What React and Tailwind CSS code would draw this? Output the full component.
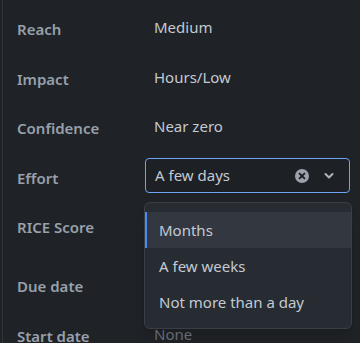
import React from 'react';

const rows = [
  { label: 'Reach', value: 'Medium' },
  { label: 'Impact', value: 'Hours/Low' },
  { label: 'Confidence', value: 'Near zero' },
];

const options = ['Months', 'A few weeks', 'Not more than a day'];

function EffortSelect() {
  return (
    <div className="relative mt-[5.5px] w-[205px]">
      <div className="flex h-[35px] items-center rounded-[4px] border border-[#6ea4f2] bg-[#1d2025] pl-[9px] pr-[15px]">
        <span className="flex-1 text-[15px] text-[#c3cad3]">A few days</span>
        <svg width="14" height="14" viewBox="0 0 14 14" className="mr-[15px]">
          <circle cx="7" cy="7" r="7" fill="#9ca2ab" />
          <path d="M4.6 4.6 L9.4 9.4 M9.4 4.6 L4.6 9.4" stroke="#1d2025" strokeWidth="2" strokeLinecap="round" />
        </svg>
        <svg width="10" height="8" viewBox="0 0 10 8">
          <path d="M1.5 2 L5 5.5 L8.5 2" fill="none" stroke="#aeb4bc" strokeWidth="2" strokeLinecap="round" strokeLinejoin="round" />
        </svg>
      </div>
      <div className="absolute left-[-1px] top-[44px] z-10 w-[208px] rounded-[6px] border border-[#3a3f47] bg-[#272b32] pt-[9px] pb-[8px] shadow-lg">
        {options.map((o, i) => (
          <div
            key={o}
            className={
              'flex h-[36px] items-center pl-[12px] text-[15px] text-[#c3cad3] ' +
              (i === 0 ? 'border-l-2 border-[#4c8ef0] bg-[#323740]' : 'border-l-2 border-transparent')
            }
          >
            {o}
          </div>
        ))}
      </div>
    </div>
  );
}

export default function App() {
  return (
    <div
      className="h-[343px] w-[360px] overflow-hidden bg-[#1f2226]"
      style={{ fontFamily: '"Noto Sans", "Open Sans", sans-serif' }}
    >
      <div className="ml-[2px] h-full border-l border-[#30353c] pt-[4px] pl-[14px]">
        {rows.map((r) => (
          <div key={r.label} className="flex h-[49.5px]">
            <div className="w-[128px] pt-[15px] text-[15px] font-semibold leading-5 text-[#97a0ab]">{r.label}</div>
            <div className="pl-[9px] pt-[13px] text-[15px] leading-5 text-[#c3cad3]">{r.value}</div>
          </div>
        ))}
        <div className="flex h-[49.5px]">
          <div className="w-[128px] pt-[15px] text-[15px] font-semibold leading-5 text-[#97a0ab]">Effort</div>
          <EffortSelect />
        </div>
        <div className="flex h-[59px]">
          <div className="w-[128px] pt-[15px] text-[15px] font-semibold leading-5 text-[#97a0ab]">RICE Score</div>
        </div>
        <div className="flex h-[49.5px]">
          <div className="w-[128px] pt-[15px] text-[15px] font-semibold leading-5 text-[#97a0ab]">Due date</div>
        </div>
        <div className="flex h-[49.5px]">
          <div className="w-[128px] pt-[15px] text-[15px] font-semibold leading-5 text-[#97a0ab]">Start date</div>
          <div className="pl-[9px] pt-[13px] text-[15px] leading-5 text-[#6b7079]">None</div>
        </div>
      </div>
    </div>
  );
}
